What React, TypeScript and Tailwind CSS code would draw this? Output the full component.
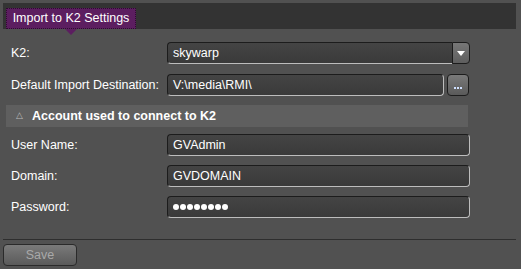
import type { FC, ReactNode } from "react";

const font = { fontFamily: '"Liberation Sans", Arial, sans-serif' };

const Field: FC<{ children: ReactNode; className?: string }> = ({ children, className = "" }) => (
  <div
    className={`h-[22px] flex items-center rounded-[4px] border border-t-[#1c1c1c] border-l-[#1c1c1c] border-r-[#bdbdbd] border-b-[#bdbdbd] bg-gradient-to-b from-[#444] to-[#3a3a3a] px-[5px] text-[12.5px] text-white whitespace-nowrap ${className}`}
  >
    {children}
  </div>
);

const Row: FC<{ label: string; children: ReactNode }> = ({ label, children }) => (
  <div className="flex items-center h-[22px]">
    <div className="w-[167px] shrink-0 pl-[11px] text-[12.5px] text-white whitespace-nowrap">{label}</div>
    {children}
  </div>
);

const App: FC = () => {
  return (
    <div className="w-[521px] h-[269px] bg-[#515151] relative overflow-hidden" style={font}>
      {/* tab strip */}
      <div className="mx-[3px] mt-[3px] w-[513px] h-[26px] bg-[#333333] flex items-end pl-[3px]">
        <div className="relative shrink-0 h-[21px] w-[130px] bg-[#5c1e60] border border-dotted border-[#2e0c30] flex items-center justify-center text-[12.5px] text-white whitespace-nowrap">
          Import to K2 Settings
          <span className="absolute left-[58px] -bottom-[7px] w-0 h-0 border-l-[6px] border-r-[6px] border-t-[6px] border-l-transparent border-r-transparent border-t-[#5c1e60]" />
        </div>
      </div>

      <div className="flex flex-col gap-[10px] pt-[13px]">
        <Row label="K2:">
          <div className="flex w-[303px]">
            <Field className="flex-1 rounded-r-none border-r-0">skywarp</Field>
            <div className="w-[18px] h-[22px] rounded-r-[4px] border border-[#1c1c1c] bg-gradient-to-b from-[#777] to-[#5e5e5e] flex items-center justify-center">
              <span className="w-0 h-0 border-l-[4px] border-r-[4px] border-t-[5px] border-l-transparent border-r-transparent border-t-white" />
            </div>
          </div>
        </Row>
        <Row label="Default Import Destination:">
          <Field className="w-[277px] text-[#d8e8ff]">V:\media\RMI\</Field>
          <div className="ml-[3px] w-[22px] h-[22px] rounded-[4px] border border-[#1c1c1c] bg-gradient-to-b from-[#7a7a7a] to-[#5a5a5a] flex items-end justify-center pb-[6px] gap-[1px]">
            <span className="w-[2px] h-[2px] bg-[#cfe0ff]" />
            <span className="w-[2px] h-[2px] bg-[#cfe0ff]" />
            <span className="w-[2px] h-[2px] bg-[#cfe0ff]" />
          </div>
        </Row>
      </div>

      {/* section header */}
      <div className="mt-[9px] ml-[6px] w-[462px] h-[22px] bg-[#5f5f5f] flex items-center text-[12.5px] font-bold text-white whitespace-nowrap">
        <span className="w-[26px] text-center text-[9px] text-[#bbbbbb] font-normal">△</span>
        Account used to connect to K2
      </div>

      <div className="flex flex-col gap-[9px] pt-[7px]">
        <Row label="User Name:">
          <Field className="w-[303px]">GVAdmin</Field>
        </Row>
        <Row label="Domain:">
          <Field className="w-[303px]">GVDOMAIN</Field>
        </Row>
        <Row label="Password:">
          <Field className="w-[303px] gap-[1px]">
            {Array.from({ length: 8 }).map((_, i) => (
              <span key={i} className="w-[6px] h-[6px] rounded-full bg-white" />
            ))}
          </Field>
        </Row>
      </div>

      <div className="mt-[21px] mx-[3px] w-[513px] h-px bg-[#2e2e2e]" />

      <button
        disabled
        className="mt-[4px] ml-[3px] w-[74px] h-[22px] rounded-[4px] border border-[#2a2a2a] bg-gradient-to-b from-[#7a7a7a] via-[#6a6a6a] to-[#5a5a5a] text-[12.5px] text-[#a9a9a9]"
      >
        Save
      </button>
    </div>
  );
};

export default App;
